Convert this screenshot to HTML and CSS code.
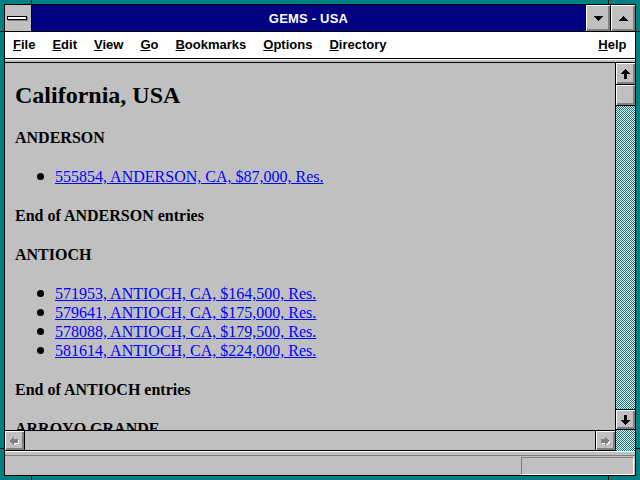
FILE: index.html
```html
<!DOCTYPE html>
<html>
<head>
<meta charset="utf-8">
<title>GEMS - USA</title>
<link rel="stylesheet" href="styles.css">
</head>
<body>
<div class="window">
  <span class="notch notch-t1"></span><span class="notch notch-t2"></span>
  <span class="notch notch-b1"></span><span class="notch notch-b2"></span>
  <span class="notch notch-l1"></span><span class="notch notch-l2"></span>
  <span class="notch notch-r1"></span><span class="notch notch-r2"></span>
  <div class="frame">
    <div class="titlebar">
      <div class="sysmenu"><div class="sysbar"></div></div>
      <div class="caption">GEMS - USA</div>
      <div class="capbtn">
        <svg width="9" height="5" viewBox="0 0 9 5" shape-rendering="crispEdges"><path d="M0 0h9v1h-1v1h-1v1h-1v1h-1v1h-1v-1h-1v-1h-1v-1h-1v-1h-1z" fill="#000"/></svg>
      </div>
      <div class="capbtn">
        <svg width="9" height="5" viewBox="0 0 9 5" shape-rendering="crispEdges"><path d="M0 0h9v1h-1v1h-1v1h-1v1h-1v1h-1v-1h-1v-1h-1v-1h-1v-1h-1z" fill="#000" transform="matrix(1 0 0 -1 0 5)"/></svg>
      </div>
    </div>
    <div class="menubar">
      <span class="menu"><u>F</u>ile</span>
      <span class="menu"><u>E</u>dit</span>
      <span class="menu"><u>V</u>iew</span>
      <span class="menu"><u>G</u>o</span>
      <span class="menu"><u>B</u>ookmarks</span>
      <span class="menu"><u>O</u>ptions</span>
      <span class="menu"><u>D</u>irectory</span>
      <span class="menu help"><u>H</u>elp</span>
    </div>
    <div class="sep-top"></div>
    <div class="main">
      <div class="leftcol">
        <div class="content">
          <h1>California, USA</h1>
          <p class="city">ANDERSON</p>
          <ul class="listings">
            <li><a href="#">555854, ANDERSON, CA, $87,000, Res.</a></li>
          </ul>
          <p class="city">End of ANDERSON entries</p>
          <p class="city">ANTIOCH</p>
          <ul class="listings">
            <li><a href="#">571953, ANTIOCH, CA, $164,500, Res.</a></li>
            <li><a href="#">579641, ANTIOCH, CA, $175,000, Res.</a></li>
            <li><a href="#">578088, ANTIOCH, CA, $179,500, Res.</a></li>
            <li><a href="#">581614, ANTIOCH, CA, $224,000, Res.</a></li>
          </ul>
          <p class="city">End of ANTIOCH entries</p>
          <p class="city">ARROYO GRANDE</p>
        </div>
        <div class="hscroll">
          <div class="hbtn hbtn-left">
            <svg width="10" height="9" viewBox="0 0 10 9" shape-rendering="crispEdges">
              <path d="M1 5h1v-1h1v-1h1v-1h1v2h4v4h-4v2h-1v-1h-1v-1h-1v-1h-1z" fill="#fff"/>
              <path d="M0 4h1v-1h1v-1h1v-1h1v2h4v4h-4v2h-1v-1h-1v-1h-1v-1h-1z" fill="#808080"/>
            </svg>
          </div>
          <div class="htrack"></div>
          <div class="hbtn hbtn-right">
            <svg width="10" height="9" viewBox="0 0 10 9" shape-rendering="crispEdges">
              <path d="M9 5h-1v-1h-1v-1h-1v-1h-1v2h-4v4h4v2h1v-1h1v-1h1v-1h1z" fill="#fff"/>
              <path d="M8 4h-1v-1h-1v-1h-1v-1h-1v2h-4v4h4v2h1v-1h1v-1h1v-1h1z" fill="#808080"/>
            </svg>
          </div>
        </div>
      </div>
      <div class="vscroll">
        <div class="vbtn vbtn-up">
          <svg width="9" height="10" viewBox="0 0 9 10" shape-rendering="crispEdges"><path d="M4 0h1v1h1v1h1v1h1v1h1v1H6v5H3V5H0V4h1V3h1V2h1V1h1z" fill="#000"/></svg>
        </div>
        <div class="thumb"></div>
        <div class="vtrack"></div>
        <div class="vbtn vbtn-down">
          <svg width="9" height="10" viewBox="0 0 9 10" shape-rendering="crispEdges"><path d="M4 0h1v1h1v1h1v1h1v1h1v1H6v5H3V5H0V4h1V3h1V2h1V1h1z" fill="#000" transform="matrix(1 0 0 -1 0 10)"/></svg>
        </div>
        <div class="corner"></div>
      </div>
    </div>
    <div class="sep-bottom"></div>
    <div class="status">
      <div class="statbox"></div>
    </div>
  </div>
</div>
</body>
</html>
```
FILE: styles.css
```css
html, body {
  margin: 0;
  padding: 0;
}

body {
  width: 640px;
  height: 480px;
  overflow: hidden;
  background: #008080;
}

.window {
  position: relative;
  box-sizing: border-box;
  width: 640px;
  height: 480px;
  padding: 4px;
  background: #008080;
}

.notch {
  position: absolute;
  background: #000;
}
.notch-t1, .notch-t2, .notch-b1, .notch-b2 { width: 1px; height: 4px; }
.notch-l1, .notch-l2, .notch-r1, .notch-r2 { width: 4px; height: 1px; }
.notch-t1 { left: 31px; top: 0; }
.notch-t2 { left: 608px; top: 0; }
.notch-b1 { left: 31px; bottom: 0; }
.notch-b2 { left: 608px; bottom: 0; }
.notch-l1 { left: 0; top: 31px; }
.notch-l2 { left: 0; top: 448px; }
.notch-r1 { right: 0; top: 31px; }
.notch-r2 { right: 0; top: 448px; }

.frame {
  height: 470px;
  border: 1px solid #000;
  background: #c0c0c0;
  display: flex;
  flex-direction: column;
}

/* Title bar */
.titlebar {
  display: flex;
  height: 26px;
  flex: none;
  border-bottom: 1px solid #000;
}

.sysmenu {
  width: 26px;
  border-right: 1px solid #000;
  background: #c0c0c0;
  display: flex;
  align-items: center;
  justify-content: center;
}

.sysbar {
  width: 18px;
  height: 2px;
  margin-left: -2px;
  margin-top: -1px;
  background: #fff;
  border: 1px solid #000;
  box-shadow: 1px 1px 0 #808080;
}

.caption {
  flex: 1;
  background: #000080;
  color: #fff;
  font-family: "Liberation Sans", Arial, sans-serif;
  font-weight: bold;
  font-size: 13px;
  letter-spacing: 0.2px;
  display: flex;
  align-items: center;
  justify-content: center;
}

.capbtn {
  width: 24px;
  border-left: 1px solid #000;
  background: #c0c0c0;
  box-shadow: inset 1px 1px #fff, inset -1px -1px #808080, inset -2px -2px #808080;
  display: flex;
  align-items: center;
  justify-content: center;
}

/* Menu bar */
.menubar {
  height: 26px;
  flex: none;
  background: #fff;
  border-bottom: 1px solid #000;
  display: flex;
  align-items: center;
  font-family: "Liberation Sans", Arial, sans-serif;
  font-weight: bold;
  font-size: 13px;
  color: #000;
}

.menu {
  padding: 0 8.5px;
  margin-top: -2px;
}

.menu:first-child {
  padding-left: 8px;
}

.menu.help {
  margin-left: auto;
}

.sep-top {
  height: 2px;
  flex: none;
  border-top: 1px solid #fff;
  border-bottom: 1px solid #000;
  background: #c0c0c0;
}

/* Main area */
.main {
  flex: 1;
  display: flex;
  min-height: 0;
}

.leftcol {
  flex: 1;
  min-width: 0;
  display: flex;
  flex-direction: column;
}

.content {
  flex: 1;
  overflow: hidden;
  padding: 0 10px;
  font-family: "Liberation Serif", "Times New Roman", serif;
  font-size: 16px;
  line-height: 19px;
  color: #000;
}

.content h1 {
  font-size: 24px;
  line-height: 28px;
  font-weight: bold;
  margin: 18px 0 19px;
}

.city {
  font-weight: bold;
  margin: 0 0 20px;
}

.listings {
  list-style: none;
  margin: 0 0 20px;
  padding: 0;
}

.listings li {
  display: flex;
  align-items: center;
  height: 19px;
}

.listings li::before {
  content: "";
  width: 7px;
  height: 7px;
  border-radius: 50%;
  background: #000;
  margin: 0 11px 0 22px;
  flex: none;
}

.listings a {
  color: #0000ff;
  text-decoration: underline;
}

/* Horizontal scrollbar */
.hscroll {
  height: 19px;
  flex: none;
  border-top: 1px solid #000;
  border-bottom: 1px solid #000;
  display: flex;
}

.hbtn {
  width: 19px;
  background: #c0c0c0;
  box-shadow: inset 1px 1px #fff, inset -1px -1px #808080, inset -2px -2px #808080;
  display: flex;
  align-items: center;
  justify-content: center;
}

.hbtn-left { border-right: 1px solid #000; }
.hbtn-right { border-left: 1px solid #000; }

.htrack {
  flex: 1;
  background: #c0c0c0;
}

/* Vertical scrollbar */
.vscroll {
  width: 19px;
  flex: none;
  border-left: 1px solid #000;
  display: flex;
  flex-direction: column;
  background: repeating-conic-gradient(#008080 0 25%, #ffffff 0 50%) 0 0 / 2px 2px;
}

.vbtn {
  flex: none;
  background: #c0c0c0;
  box-shadow: inset 1px 1px #fff, inset -1px -1px #808080, inset -2px -2px #808080;
  display: flex;
  align-items: center;
  justify-content: center;
}

.vbtn-up {
  height: 21px;
  border-bottom: 1px solid #000;
}

.thumb {
  flex: none;
  height: 20px;
  border-bottom: 1px solid #000;
  background: #c0c0c0;
  box-shadow: inset 1px 1px #fff, inset -1px -1px #808080, inset -2px -2px #808080;
}

.vtrack {
  flex: 1;
}

.vbtn-down {
  height: 19px;
  border-top: 1px solid #000;
  border-bottom: 1px solid #000;
}

.corner {
  flex: none;
  height: 21px;
}

/* Status bar */
.sep-bottom {
  height: 5px;
  flex: none;
  background: linear-gradient(#fff 0 1px, #c0c0c0 1px 4px, #808080 4px 5px);
}

.status {
  flex: none;
  height: 18px;
  display: flex;
  justify-content: flex-end;
  padding: 1px 1px 0 0;
}

.statbox {
  width: 111px;
  height: 16px;
  border: 1px solid;
  border-color: #808080 #fff #fff #808080;
}
```
